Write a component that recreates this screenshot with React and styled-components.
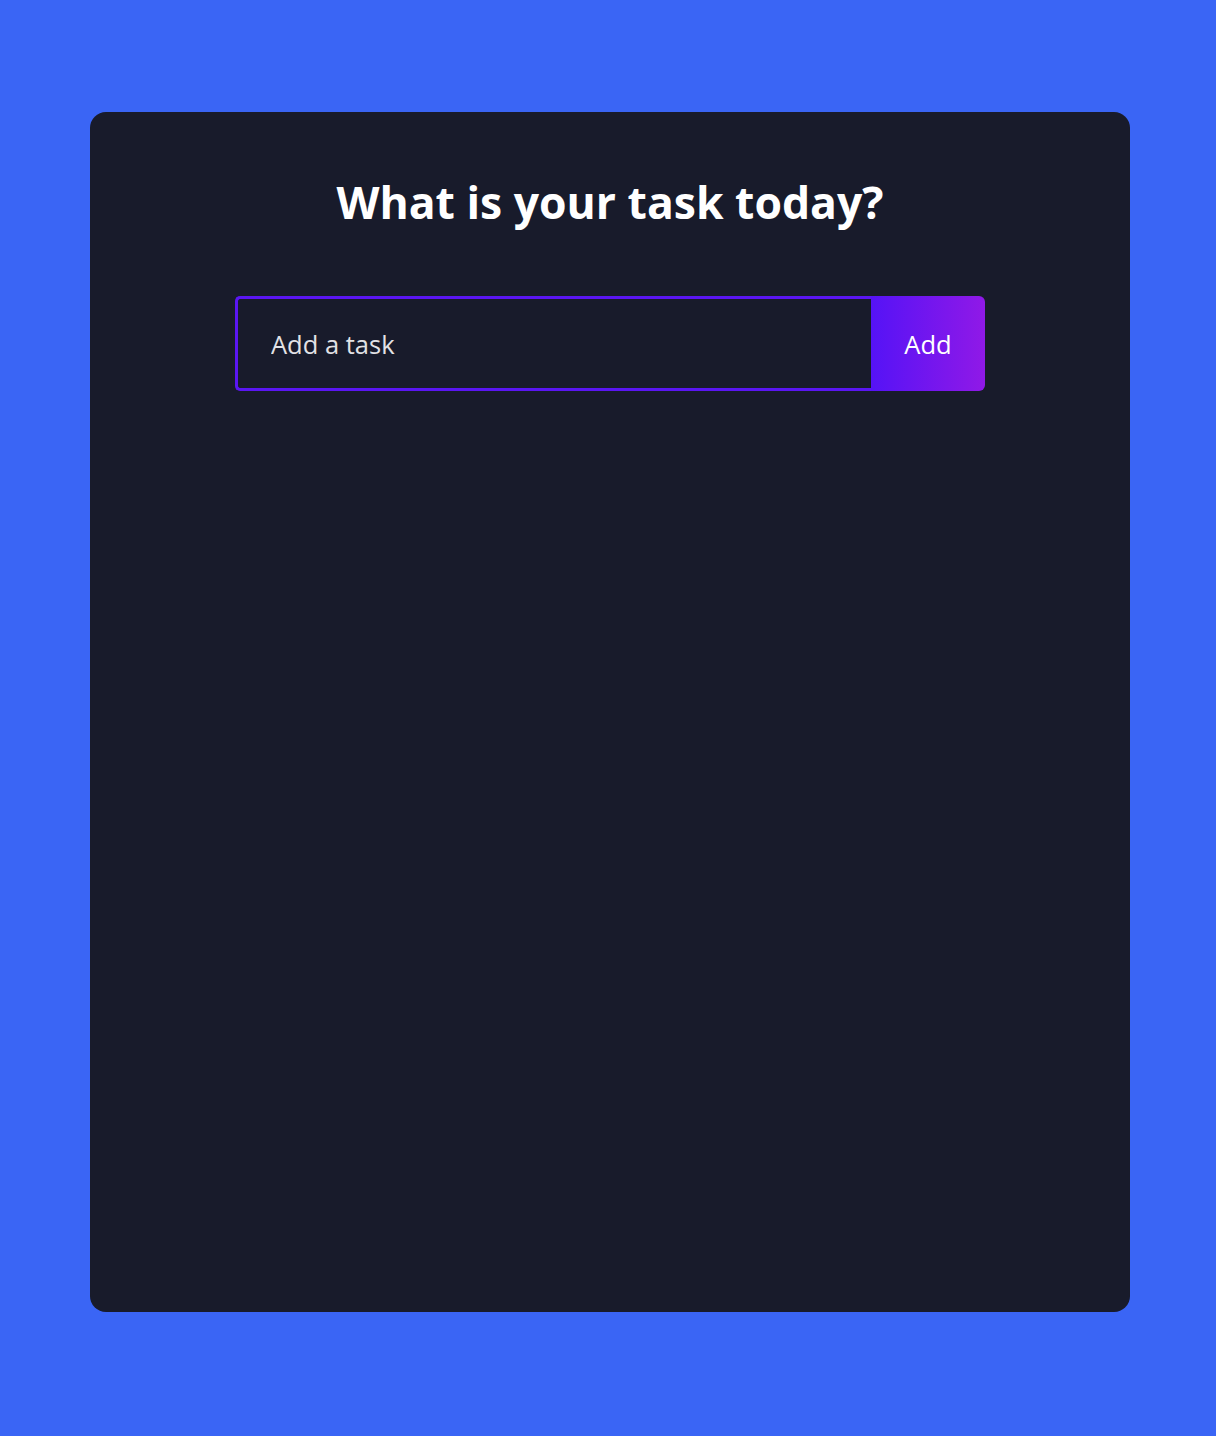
import React from "react";
import styled, { createGlobalStyle } from "styled-components";

const Global = createGlobalStyle`
  * { box-sizing: border-box; }
  html, body { margin: 0; padding: 0; }
  body {
    background: #3a65f5;
    font-family: "Open Sans", "Noto Sans", sans-serif;
    min-height: 1436px;
  }
`;

const Page = styled.div`
  display: flex;
  justify-content: center;
  padding: 112px 0 0 4px;
`;

const Card = styled.div`
  width: 1040px;
  height: 1200px;
  background: #181b2b;
  border-radius: 16px;
  display: flex;
  flex-direction: column;
  align-items: center;
  padding-top: 60px;
`;

const Title = styled.h1`
  margin: 0;
  color: #ffffff;
  font-size: 44.5px;
  font-weight: 700;
  line-height: 60px;
`;

const Form = styled.form`
  display: flex;
  width: 750px;
  height: 95px;
  margin-top: 64px;
`;

const Input = styled.input`
  flex: 1;
  min-width: 0;
  background: transparent;
  border: 3px solid #5a16f2;
  border-right: none;
  border-radius: 5px 0 0 5px;
  outline: none;
  padding: 0 33px;
  color: #ffffff;
  font-family: inherit;
  font-size: 25.5px;
  &::placeholder { color: #e2e2e6; opacity: 1; }
`;

const Button = styled.button`
  width: 114px;
  border: none;
  border-radius: 0 6px 6px 0;
  background: linear-gradient(90deg, #5513f6 0%, #9019e7 100%);
  color: #ffffff;
  font-family: inherit;
  font-size: 25.5px;
  cursor: pointer;
`;

export default function App() {
  return (
    <>
      <Global />
      <Page>
        <Card>
          <Title>What is your task today?</Title>
          <Form onSubmit={(e) => e.preventDefault()}>
            <Input type="text" placeholder="Add a task" />
            <Button type="submit">Add</Button>
          </Form>
        </Card>
      </Page>
    </>
  );
}
